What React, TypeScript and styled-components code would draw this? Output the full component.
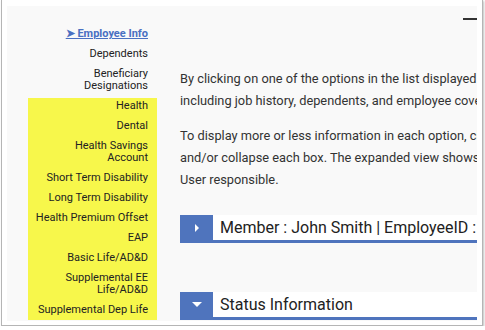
import React from "react";
import styled, { createGlobalStyle } from "styled-components";

const GlobalStyle = createGlobalStyle`
  html, body {
    margin: 0;
    padding: 0;
    background: #fff;
    font-family: Roboto, "Liberation Sans", Arial, sans-serif;
  }
`;

const Window = styled.div`
  width: 482px;
  height: 326px;
  margin-left: 1px;
  box-sizing: border-box;
  padding: 6px 5px 4px 5px;
  background: #fff;
  border-left: 1px solid #b5b5b5;
  border-right: 1px solid #b5b5b5;
  border-bottom: 1px solid #b5b5b5;
  box-shadow: 1px 1px 2px rgba(0, 0, 0, 0.25);
`;

const Panel = styled.div`
  display: flex;
  height: 100%;
  background: #f9f9f9;
  overflow: hidden;
`;

const Sidebar = styled.nav`
  width: 150px;
  flex-shrink: 0;
  padding-top: 22px;
  display: flex;
  flex-direction: column;
  gap: 8px;
`;

const NavItem = styled.a<{ $active?: boolean }>`
  display: block;
  padding-right: 9px;
  text-align: right;
  font-size: 11px;
  line-height: 12px;
  color: ${(p) => (p.$active ? "#4a70c2" : "#222")};
  font-weight: ${(p) => (p.$active ? 700 : 400)};
  text-decoration: ${(p) => (p.$active ? "underline" : "none")};
`;

const Highlight = styled.div`
  margin-left: 21px;
  margin-top: -2px;
  padding: 2px 0 4px;
  background: #f7f74b;
  display: flex;
  flex-direction: column;
  gap: 8px;
`;

const Main = styled.main`
  flex: 1;
  min-width: 0;
  padding-left: 23px;
  overflow: hidden;
`;

const TopBar = styled.div`
  display: flex;
  justify-content: flex-end;
  padding-top: 12px;
`;

const Dash = styled.span`
  width: 14px;
  height: 2px;
  background: #333;
`;

const Paragraph = styled.p`
  margin: 0;
  font-size: 12.8px;
  line-height: 22px;
  color: #333;
  white-space: nowrap;
`;

const Intro = styled.div`
  display: flex;
  flex-direction: column;
  gap: 13px;
  margin-top: 48px;
`;

const Section = styled.div<{ $gap: number }>`
  display: flex;
  height: 28px;
  box-sizing: border-box;
  margin-top: ${(p) => p.$gap}px;
  background: #fff;
  border-bottom: 3px solid #4f74bd;
`;

const Toggle = styled.span`
  width: 33px;
  flex-shrink: 0;
  background: #4f74bd;
  display: flex;
  align-items: center;
  justify-content: center;
`;

const SectionTitle = styled.span`
  padding-left: 7px;
  font-size: 16px;
  line-height: 25px;
  color: #222;
  white-space: nowrap;
`;

const CaretRight = () => (
  <svg width="6" height="8" viewBox="0 0 6 8">
    <path d="M1 0 L5 4 L1 8 Z" fill="#fff" />
  </svg>
);

const CaretDown = () => (
  <svg width="10" height="6" viewBox="0 0 10 6">
    <path d="M0 0 L10 0 L5 5 Z" fill="#fff" />
  </svg>
);

const plans = [
  ["Health"],
  ["Dental"],
  ["Health Savings", "Account"],
  ["Short Term Disability"],
  ["Long Term Disability"],
  ["Health Premium Offset"],
  ["EAP"],
  ["Basic Life/AD&D"],
  ["Supplemental EE", "Life/AD&D"],
  ["Supplemental Dep Life"],
];

const renderLines = (lines: string[]) =>
  lines.map((l, i) => (
    <React.Fragment key={l}>
      {i > 0 && <br />}
      {l}
    </React.Fragment>
  ));

export default function App() {
  return (
    <>
      <GlobalStyle />
      <Window>
        <Panel>
          <Sidebar>
            <NavItem $active>➤ Employee Info</NavItem>
            <NavItem>Dependents</NavItem>
            <NavItem>{renderLines(["Beneficiary", "Designations"])}</NavItem>
            <Highlight>
              {plans.map((p) => (
                <NavItem key={p.join(" ")}>{renderLines(p)}</NavItem>
              ))}
            </Highlight>
          </Sidebar>
          <Main>
            <TopBar>
              <Dash />
            </TopBar>
            <Intro>
              <Paragraph>
                By clicking on one of the options in the list displayed on the left, you can view details
                <br />
                including job history, dependents, and employee coverage information.
              </Paragraph>
              <Paragraph>
                To display more or less information in each option, click on the arrow icon to expand
                <br />
                and/or collapse each box. The expanded view shows information for which the
                <br />
                User responsible.
              </Paragraph>
            </Intro>
            <Section $gap={24}>
              <Toggle>
                <CaretRight />
              </Toggle>
              <SectionTitle>Member : John Smith | EmployeeID : 000123</SectionTitle>
            </Section>
            <Section $gap={49}>
              <Toggle>
                <CaretDown />
              </Toggle>
              <SectionTitle>Status Information</SectionTitle>
            </Section>
          </Main>
        </Panel>
      </Window>
    </>
  );
}
